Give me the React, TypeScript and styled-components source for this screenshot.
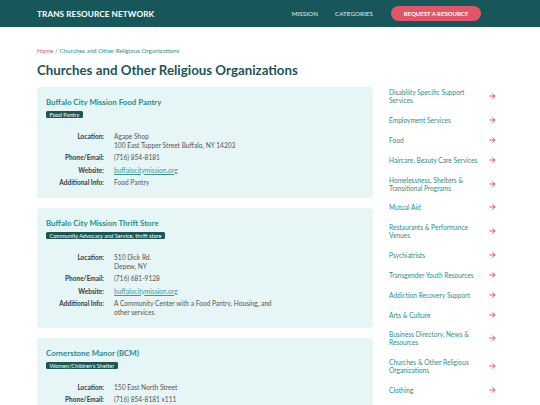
import React from "react";
import styled, { createGlobalStyle } from "styled-components";

const GlobalStyle = createGlobalStyle`
  * { box-sizing: border-box; }
  body {
    margin: 0;
    background: #ffffff;
    font-family: Lato, "Open Sans", sans-serif;
    color: #444;
  }
  ul { list-style: none; margin: 0; padding: 0; }
`;

const Header = styled.header`
  height: 27px;
  background: #17575a;
  display: flex;
  align-items: center;
  padding: 0 59px 0 37px;
`;

const Brand = styled.div`
  color: #ffffff;
  font-weight: 700;
  font-size: 8.2px;
  letter-spacing: 0.1px;
  flex-grow: 1;
`;

const Nav = styled.nav`
  display: flex;
  align-items: center;
  gap: 17px;
  > a {
    color: #e6f1f1;
    font-size: 6.2px;
    text-decoration: none;
    letter-spacing: 0.1px;
  }
`;

const RequestButton = styled.button`
  margin-left: 1px;
  height: 15px;
  width: 90px;
  border: none;
  border-radius: 8px;
  background: #e15569;
  color: #ffffff;
  font-family: inherit;
  font-weight: 700;
  font-size: 6px;
  padding: 0;
`;

const Page = styled.div`
  padding: 20px 40px 0 37px;
`;

const Breadcrumb = styled.div`
  font-size: 6.2px;
  line-height: 8px;
  color: #2f8d8a;
  > a { color: #e05a6e; text-decoration: none; }
`;

const Title = styled.h1`
  margin: 6px 0 8px;
  font-size: 13.3px;
  line-height: 18px;
  font-weight: 700;
  color: #1d5556;
`;

const Columns = styled.div`
  display: grid;
  grid-template-columns: 336px 1fr;
  gap: 13px;
  align-items: start;
`;

const CardList = styled.div`
  display: flex;
  flex-direction: column;
  gap: 10px;
`;

const Card = styled.article`
  background: #e6f6f6;
  border-radius: 3px;
  padding: 9px 9px 11px;
`;

const CardTitle = styled.h2`
  margin: 0;
  font-size: 7.9px;
  line-height: 12px;
  font-weight: 700;
  color: #2a8c89;
`;

const Tag = styled.span`
  display: block;
  width: fit-content;
  margin-top: 2.5px;
  height: 7px;
  line-height: 7px;
  padding: 0 3.5px;
  border-radius: 1.5px;
  background: #1b5657;
  color: #ffffff;
  font-size: 5.6px;
`;

const Details = styled.dl`
  margin: 14px 0 0;
  display: grid;
  grid-template-columns: 58px 1fr;
  column-gap: 10px;
  row-gap: 3.5px;
  font-size: 6.6px;
  line-height: 9px;
  > dt {
    text-align: right;
    font-weight: 700;
    font-size: 6.5px;
    color: #3a3a3a;
  }
  > dd {
    margin: 0;
    color: #555;
    max-width: 160px;
  }
  a { color: #3a9a96; }
`;

const Sidebar = styled.ul`
  margin-top: -4.5px;
  padding: 0 4px 0 3px;
`;

const SideItem = styled.li`
  display: flex;
  align-items: center;
  justify-content: space-between;
  padding: 5.92px 0;
  font-size: 6.6px;
  line-height: 8px;
  color: #2f8c89;
  > span { max-width: 95px; }
  > svg { flex-shrink: 0; display: block; }
`;

function Arrow() {
  return (
    <svg width="7" height="6" viewBox="0 0 7 6" fill="none" stroke="#e8576c" strokeWidth="1" strokeLinecap="round" strokeLinejoin="round">
      <path d="M0.8 3h5.2M3.6 0.8L6 3L3.6 5.2" />
    </svg>
  );
}

type Resource = {
  name: string;
  tag: string;
  location: string[];
  phone: string;
  website?: string;
  info?: string;
};

const resources: Resource[] = [
  {
    name: "Buffalo City Mission Food Pantry",
    tag: "Food Pantry",
    location: ["Agape Shop", "100 East Tupper Street Buffalo, NY 14203"],
    phone: "(716) 854-8181",
    website: "buffalocitymission.org",
    info: "Food Pantry",
  },
  {
    name: "Buffalo City Mission Thrift Store",
    tag: "Community Advocacy and Service, thrift store",
    location: ["510 Dick Rd.", "Depew, NY"],
    phone: "(716) 681-9128",
    website: "buffalocitymission.org",
    info: "A Community Center with a Food Pantry, Housing, and other services",
  },
  {
    name: "Cornerstone Manor (BCM)",
    tag: "Women/Children's Shelter",
    location: ["150 East North Street"],
    phone: "(716) 854-8181 x111",
    website: "buffalocitymission.org",
    info: "Women and Children's Shelter",
  },
];

const categories = [
  "Disability Specific Support Services",
  "Employment Services",
  "Food",
  "Haircare, Beauty Care Services",
  "Homelessness, Shelters & Transitional Programs",
  "Mutual Aid",
  "Restaurants & Performance Venues",
  "Psychiatrists",
  "Transgender Youth Resources",
  "Addiction Recovery Support",
  "Arts & Culture",
  "Business Directory, News & Resources",
  "Churches & Other Religious Organizations",
  "Clothing",
];

function ResourceCard({ r }: { r: Resource }) {
  return (
    <Card>
      <CardTitle>{r.name}</CardTitle>
      <Tag>{r.tag}</Tag>
      <Details>
        <dt>Location:</dt>
        <dd>
          {r.location.map((l) => (
            <div key={l}>{l}</div>
          ))}
        </dd>
        <dt>Phone/Email:</dt>
        <dd>{r.phone}</dd>
        {r.website && (
          <>
            <dt>Website:</dt>
            <dd>
              <a href="#">{r.website}</a>
            </dd>
          </>
        )}
        {r.info && (
          <>
            <dt>Additional Info:</dt>
            <dd>{r.info}</dd>
          </>
        )}
      </Details>
    </Card>
  );
}

export default function App() {
  return (
    <>
      <GlobalStyle />
      <Header>
        <Brand>TRANS RESOURCE NETWORK</Brand>
        <Nav>
          <a href="#">MISSION</a>
          <a href="#">CATEGORIES</a>
          <RequestButton>REQUEST A RESOURCE</RequestButton>
        </Nav>
      </Header>
      <Page>
        <Breadcrumb>
          <a href="#">Home</a> / Churches and Other Religious Organizations
        </Breadcrumb>
        <Title>Churches and Other Religious Organizations</Title>
        <Columns>
          <CardList>
            {resources.map((r) => (
              <ResourceCard key={r.name} r={r} />
            ))}
          </CardList>
          <Sidebar>
            {categories.map((c) => (
              <SideItem key={c}>
                <span>{c}</span>
                <Arrow />
              </SideItem>
            ))}
          </Sidebar>
        </Columns>
      </Page>
    </>
  );
}
